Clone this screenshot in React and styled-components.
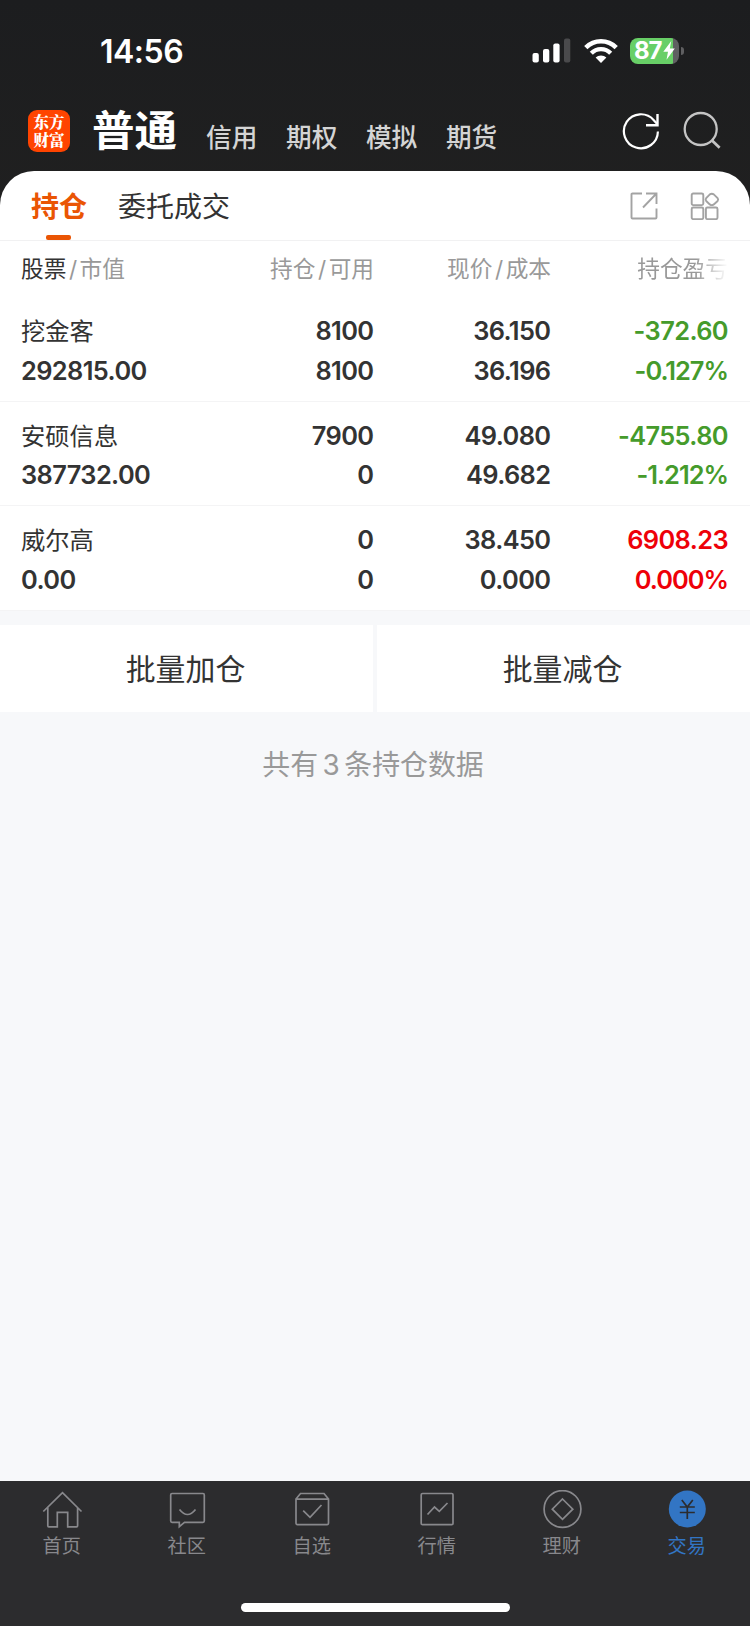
import React, { useState } from "react";
import styled, { createGlobalStyle } from "styled-components";

const markets = ["信用", "期权", "模拟", "期货"];

const positions = [
  {
    name: "挖金客",
    value: "292815.00",
    amount: "8100",
    available: "8100",
    price: "36.150",
    cost: "36.196",
    profit: "-372.60",
    percent: "-0.127%",
    color: "#459b2b",
  },
  {
    name: "安硕信息",
    value: "387732.00",
    amount: "7900",
    available: "0",
    price: "49.080",
    cost: "49.682",
    profit: "-4755.80",
    percent: "-1.212%",
    color: "#459b2b",
  },
  {
    name: "威尔高",
    value: "0.00",
    amount: "0",
    available: "0",
    price: "38.450",
    cost: "0.000",
    profit: "6908.23",
    percent: "0.000%",
    color: "#ee0008",
  },
];

const SignalIcon = () => (
  <svg width="39" height="26" viewBox="0 0 39 26" fill="#fff">
    <rect x="0.5" y="15" width="6.3" height="9.5" rx="2" />
    <rect x="11" y="11" width="6.3" height="13.5" rx="2" />
    <rect x="21.3" y="5.5" width="6.3" height="19" rx="2" />
    <rect x="32" y="0.5" width="6.3" height="24" rx="2" fill="#4a4a4c" />
  </svg>
);

const WifiIcon = () => (
  <svg width="34" height="26" viewBox="0 0 34 26" fill="none" stroke="#fff">
    <path d="M1.8 9.6 A21.5 21.5 0 0 1 32.2 9.6" strokeWidth="4.6" />
    <path d="M7.3 15.2 A13.7 13.7 0 0 1 26.7 15.2" strokeWidth="4.4" />
    <path
      d="M17 25 L11.6 19.6 A7.8 7.8 0 0 1 22.4 19.6 Z"
      fill="#fff"
      stroke="none"
    />
  </svg>
);

const RefreshIcon = () => (
  <svg width="40" height="40" viewBox="0 0 40 40" fill="none" stroke="#fff">
    <path d="M36.9 20.5 A17 17 0 1 1 32.8 9.2 L36 12.8" strokeWidth="2.2" />
    <path d="M36.5 3 V14.2 H25" strokeWidth="2.4" />
  </svg>
);

const SearchIcon = () => (
  <svg width="40" height="40" viewBox="0 0 40 40" fill="none" stroke="#c4c4c4">
    <circle cx="18.7" cy="18" r="16" strokeWidth="2.3" />
    <path d="M29.8 29.3 L37.6 36.8" strokeWidth="2.8" />
  </svg>
);

const ShareIcon = () => (
  <svg width="28" height="28" viewBox="0 0 28 28" fill="none" stroke="#a3a3a3">
    <path
      d="M12 1.5 H2.5 Q1.5 1.5 1.5 2.5 V25.5 Q1.5 26.5 2.5 26.5 H25.5 Q26.5 26.5 26.5 25.5 V16.5 M16 1.5 H26.5 V12 M26 2 L13 15.5"
      strokeWidth="1.9"
    />
  </svg>
);

const AppsIcon = () => (
  <svg width="30" height="28" viewBox="0 0 30 28" fill="none" stroke="#a3a3a3">
    <g strokeWidth="1.9">
      <rect x="1.7" y="1.5" width="11.6" height="11.6" rx="1.5" />
      <rect x="1.7" y="15.5" width="11.6" height="11.6" rx="1.5" />
      <rect x="15.9" y="15.5" width="11.6" height="11.6" rx="1.5" />
      <path d="M19.8 2.4 Q21.8 1.2 23.8 2.4 L27.6 6.2 Q28.7 7.6 27.6 9 L23.8 12.4 Q21.8 13.8 19.8 12.4 L16.2 9 Q15.1 7.6 16.2 6.2 Z" />
    </g>
  </svg>
);

const navItems = [
  {
    label: "首页",
    icon: <path d="M1.3 21.5 L20.5 2.7 L39.5 21.5 M5.8 17.6 V35.8 Q5.8 36.8 6.8 36.8 H15.3 V22.3 H25.7 V36.8 H34.6 Q35.6 36.8 35.6 35.8 V17.6" />,
  },
  {
    label: "社区",
    icon: <path d="M5 3.5 H36 Q37.3 3.5 37.3 5 V31 Q37.3 32.3 36 32.3 H17.5 L12.3 36.6 V32.3 H5 Q3.7 32.3 3.7 31 V5 Q3.7 3.5 5 3.5 Z M12.5 19.5 Q20.5 29.5 28.5 19.5" />,
  },
  {
    label: "自选",
    icon: <path d="M4 9 L8.5 3.5 H32 L36.5 9 V33.3 Q36.5 34.6 35.2 34.6 H5.3 Q4 34.6 4 33.3 Z M4 9.2 H36.5 M11.2 20.7 L18 27.4 L29.5 15" />,
  },
  {
    label: "行情",
    icon: <path d="M5.5 3.5 H34.8 Q36 3.5 36 4.7 V33.4 Q36 34.6 34.8 34.6 H5.5 Q4.2 34.6 4.2 33.4 V4.7 Q4.2 3.5 5.5 3.5 Z M10.5 24.5 L17.5 17 L22.3 21.3 L30.5 13" />,
  },
  {
    label: "理财",
    icon: (
      <>
        <circle cx="20.5" cy="19" r="18.4" />
        <path d="M20.5 9 L30.8 19.2 L20.5 29.4 L10.3 19.2 Z" />
      </>
    ),
  },
  {
    label: "交易",
    icon: (
      <>
        <circle cx="20.3" cy="19" r="18.5" fill="#3275c4" stroke="none" />
        <path
          d="M14.8 10 L20.3 17 L25.8 10 M12.8 17 H27.8 M12.8 22.5 H27.8 M20.3 17 V29"
          stroke="#2c2c2e"
        />
      </>
    ),
  },
];

export default function App() {
  const [activeNav, setActiveNav] = useState("交易");
  const [activeTab, setActiveTab] = useState("持仓");

  return (
    <Page>
      <GlobalStyle />
      <StatusBar>
        <Time>14:56</Time>
        <StatusIcons>
          <SignalIcon />
          <WifiIcon />
          <Battery>
            <BatteryBody>
              87
              <svg width="12" height="19" viewBox="0 0 12 19" fill="#fff">
                <path d="M8.3 0 L0.3 10.8 H5 L3.5 18.8 L11.8 7.6 H6.8 Z" />
              </svg>
            </BatteryBody>
            <BatteryTip />
          </Battery>
        </StatusIcons>
      </StatusBar>
      <Header>
        <Logo>
          东方
          <br />
          财富
        </Logo>
        <Title>普通</Title>
        <Markets>
          {markets.map((item) => (
            <Market key={item}>{item}</Market>
          ))}
        </Markets>
        <HeaderIcons>
          <RefreshIcon />
          <SearchIcon />
        </HeaderIcons>
      </Header>
      <Sheet>
        <Tabs>
          {["持仓", "委托成交"].map((item) => (
            <Tab
              key={item}
              $active={item === activeTab}
              onClick={() => setActiveTab(item)}
            >
              {item}
            </Tab>
          ))}
          <TabIcons>
            <ShareIcon />
            <AppsIcon />
          </TabIcons>
        </Tabs>
        <TableHead>
          <HeadCell>
            <b>股票</b>
            <i>/</i>市值
          </HeadCell>
          <HeadCell>
            持仓<i>/</i>可用
          </HeadCell>
          <HeadCell>
            现价<i>/</i>成本
          </HeadCell>
          <HeadCell $fade>持仓盈亏</HeadCell>
        </TableHead>
        {positions.map((item) => (
          <Row key={item.name}>
            <Cell>
              <Name>{item.name}</Name>
              <span>{item.value}</span>
            </Cell>
            <Cell>
              <span>{item.amount}</span>
              <span>{item.available}</span>
            </Cell>
            <Cell>
              <span>{item.price}</span>
              <span>{item.cost}</span>
            </Cell>
            <Cell $color={item.color}>
              <span>{item.profit}</span>
              <Percent>{item.percent}</Percent>
            </Cell>
          </Row>
        ))}
      </Sheet>
      <Actions>
        <ActionButton>批量加仓</ActionButton>
        <ActionButton>批量减仓</ActionButton>
      </Actions>
      <Total>
        共有<em>3</em>条持仓数据
      </Total>
      <BottomBar>
        <Nav>
          {navItems.map(({ label, icon }) => (
            <NavItem
              key={label}
              $active={label === activeNav}
              onClick={() => setActiveNav(label)}
            >
              <svg
                width="41"
                height="39"
                viewBox="0 0 41 39"
                fill="none"
                stroke="#88888c"
                strokeWidth="1.7"
              >
                {icon}
              </svg>
              <span>{label}</span>
            </NavItem>
          ))}
        </Nav>
        <HomeIndicator />
      </BottomBar>
    </Page>
  );
}

const GlobalStyle = createGlobalStyle`
  * {
    box-sizing: border-box;
  }
  body {
    margin: 0;
    font-family: Inter, "Noto Sans CJK SC", sans-serif;
  }
  svg {
    display: block;
    flex-shrink: 0;
  }
  button {
    border: none;
    padding: 0;
    background: none;
    font: inherit;
  }
`;
const Page = styled.div`
  width: 750px;
  height: 1626px;
  display: flex;
  flex-direction: column;
  background: linear-gradient(#1c1d1f, #202020 210px, #f7f8fa 210px);
`;
const StatusBar = styled.div`
  height: 100px;
  padding: 2px 66px 0 100px;
  display: flex;
  align-items: center;
  justify-content: space-between;
`;
const Time = styled.div`
  color: #fff;
  font-size: 32px;
  font-weight: 600;
  letter-spacing: -0.5px;
`;
const StatusIcons = styled.div`
  display: flex;
  align-items: center;
  gap: 12.5px;
  margin-top: -1px;
`;
const Battery = styled.div`
  display: flex;
  align-items: center;
  gap: 2px;
`;
const BatteryBody = styled.div`
  width: 49px;
  height: 26px;
  padding-left: 4px;
  display: flex;
  align-items: center;
  gap: 2px;
  border-radius: 8px;
  background: linear-gradient(90deg, #68cf67 43px, #5f5f61 43px);
  color: #fff;
  font-size: 24px;
  font-weight: 700;
  letter-spacing: -1.2px;
`;
const BatteryTip = styled.div`
  width: 3px;
  height: 8px;
  border-radius: 0 3px 3px 0;
  background: #5f5f61;
`;
const Header = styled.div`
  height: 71px;
  padding: 0 28px;
  display: flex;
  color: #fff;
`;
const Logo = styled.div`
  width: 42px;
  height: 42px;
  margin: 10px 22px 0 0;
  padding-top: 3px;
  border-radius: 9px;
  background: #ff4400;
  font-family: "Noto Serif CJK SC", "Noto Sans CJK SC", sans-serif;
  font-size: 15.5px;
  font-weight: 900;
  line-height: 17.5px;
  text-align: center;
`;
const Title = styled.div`
  width: 114px;
  margin-top: 6px;
  font-size: 42.5px;
  font-weight: 700;
  line-height: 50px;
`;
const Markets = styled.div`
  display: flex;
  gap: 28.6px;
  margin-top: 23px;
`;
const Market = styled.div`
  color: #d4d4d4;
  font-size: 25.7px;
  font-weight: 500;
  line-height: 30px;
`;
const HeaderIcons = styled.div`
  display: flex;
  gap: 21px;
  margin: 11px 0.5px 0 auto;
`;
const Sheet = styled.div`
  border-radius: 34px 34px 0 0;
  background: #fff;
`;
const Tabs = styled.div`
  height: 70px;
  padding: 0 30px 0 31px;
  display: flex;
  border-bottom: 1px solid #f1f1f2;
`;
const Tab = styled.button`
  position: relative;
  margin-right: 31px;
  padding-top: 2px;
  color: ${(p) => (p.$active ? "#ea5504" : "#333")};
  font-size: 28px;
  font-weight: ${(p) => (p.$active ? 700 : 400)};
  line-height: 40px;

  &::after {
    content: "";
    display: ${(p) => (p.$active ? "block" : "none")};
    position: absolute;
    bottom: 0;
    left: 15px;
    width: 25px;
    height: 5px;
    border-radius: 2px;
    background: #ea5504;
  }
`;
const TabIcons = styled.div`
  display: flex;
  gap: 32.5px;
  margin: 21px 0 0 auto;
`;
const TableHead = styled.div`
  height: 56px;
  padding: 13px 22px 0 21px;
  display: grid;
  grid-template-columns: 176px 177px 177px 177px;
`;
const HeadCell = styled.div`
  color: #999;
  font-size: 22.7px;
  line-height: 30px;
  text-align: right;
  ${(p) =>
    p.$fade &&
    "mask-image: linear-gradient(90deg, #000 calc(100% - 32px), transparent);"}

  &:first-child {
    text-align: left;
  }
  b {
    color: #333;
    font-weight: 400;
  }
  i {
    margin: 0 2.5px;
    font-style: normal;
  }
`;
const Row = styled.div`
  height: 104.7px;
  padding: 14px 22px 0 21px;
  display: grid;
  grid-template-columns: 175.5px 177px 177px 177.5px;
  border-bottom: 1px solid #f4f4f5;
`;
const Cell = styled.div`
  display: flex;
  flex-direction: column;
  align-items: flex-end;
  color: ${(p) => p.$color || "#333"};
  font-size: 25.4px;
  font-weight: 600;
  letter-spacing: -0.6px;
  line-height: 39.6px;

  &:first-child {
    align-items: flex-start;
  }
`;
const Name = styled.span`
  position: relative;
  top: 1px;
  font-size: 24.3px;
  font-weight: 400;
  letter-spacing: 0;
`;
const Percent = styled.span`
  letter-spacing: -1px;
`;
const Actions = styled.div`
  margin-top: 14px;
  display: grid;
  grid-template-columns: 1fr 1fr;
  gap: 4px;
`;
const ActionButton = styled.button`
  height: 87px;
  padding: 0 2px 4px 0;
  background: #fff;
  color: #333;
  font-size: 29.9px;
`;
const Total = styled.div`
  margin-top: 33px;
  padding-right: 4px;
  color: #999;
  font-size: 27.9px;
  line-height: 40px;
  text-align: center;

  em {
    margin: 0 4.5px;
    font-style: normal;
  }
`;
const BottomBar = styled.div`
  height: 145px;
  margin-top: auto;
  display: flex;
  flex-direction: column;
  align-items: center;
  justify-content: space-between;
  background: #2c2c2e;
`;
const Nav = styled.div`
  width: 100%;
  padding-top: 9px;
  display: grid;
  grid-template-columns: repeat(6, 1fr);
`;
const NavItem = styled.button`
  display: flex;
  flex-direction: column;
  align-items: center;
  gap: 2.5px;
  color: ${(p) => (p.$active ? "#3275c4" : "#88888c")};
  font-size: 19.2px;
  line-height: 28px;

  span {
    margin-right: 1.5px;
  }
`;
const HomeIndicator = styled.div`
  width: 269px;
  height: 9px;
  margin-bottom: 14px;
  border-radius: 5px;
  background: #fff;
`;
